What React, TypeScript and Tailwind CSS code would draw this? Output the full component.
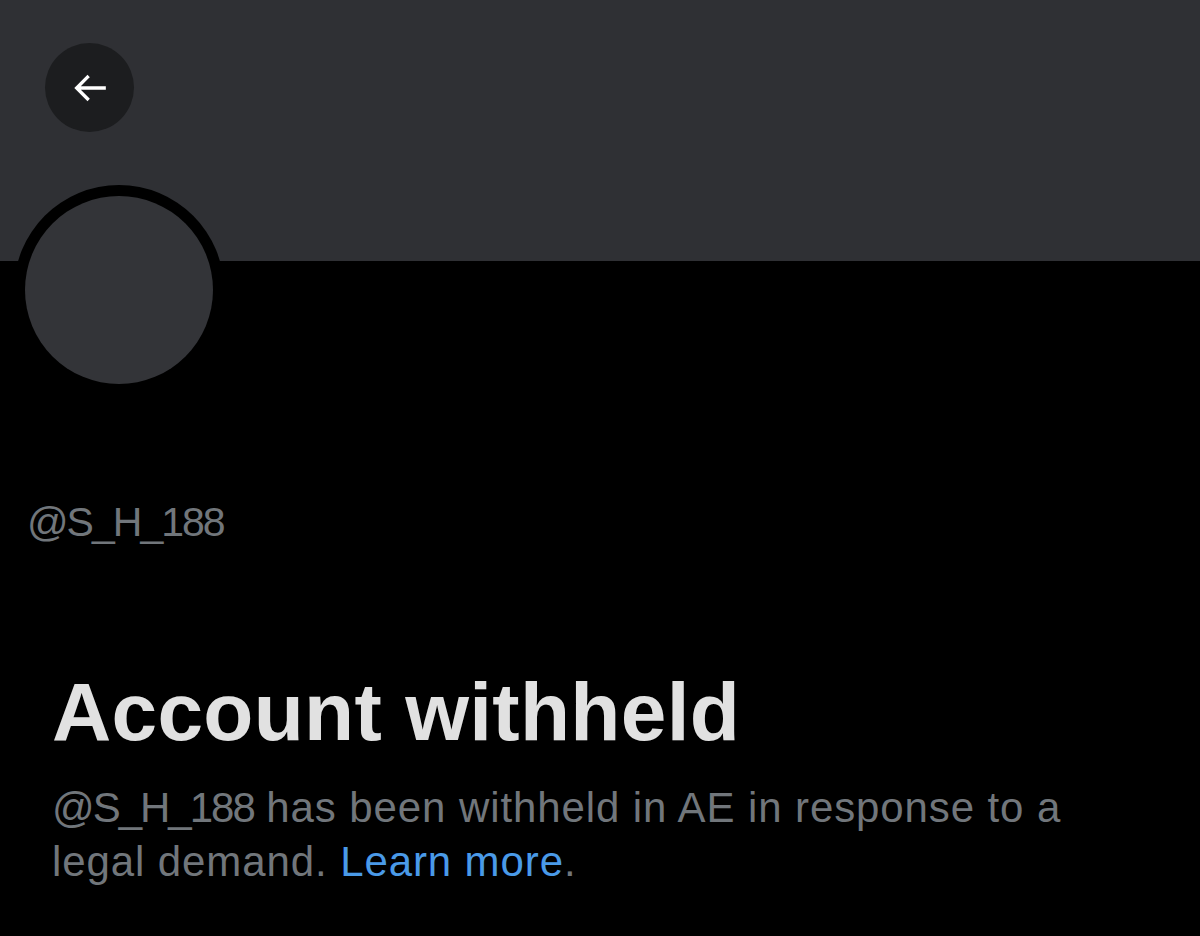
import React from "react";

export default function App() {
  return (
    <div
      className="w-[1200px] h-[936px] bg-black overflow-hidden"
      style={{ fontFamily: '"Liberation Sans", Arial, sans-serif' }}
    >
      <div className="h-[261px] bg-[#2f3034] pl-[45px] pt-[43px]">
        <button className="w-[89px] h-[89px] rounded-full bg-[#1c1d1f] flex items-center justify-center">
          <svg width="40" height="40" viewBox="0 0 24 24" fill="none">
            <path
              d="M20.5 12H4.5M10.5 5.5L4 12L10.5 18.5"
              stroke="#ffffff"
              strokeWidth="2"
              strokeLinecap="square"
            />
          </svg>
        </button>
      </div>
      <div className="-mt-[76px] ml-[14px] w-[210px] h-[210px] rounded-full bg-black p-[11px]">
        <div className="w-full h-full rounded-full bg-[#333438]" />
      </div>
      <div className="mt-[103px] pl-[27px] text-[41px] leading-[48px] text-[#71767b] tracking-[-2px]">
        @S_H_188
      </div>
      <div className="mt-[121px] pl-[52px] pr-[60px]">
        <h1 className="text-[82px] leading-[90px] font-bold text-[#e1e1e1] tracking-[0.3px]">
          Account withheld
        </h1>
        <p className="mt-[24px] text-[42px] leading-[54px] text-[#71767b] tracking-[0.9px]">
          <span className="tracking-[-2px]">@S_H_188</span> has been withheld in AE in
          response to a legal demand. <a className="text-[#4a9ae8]">Learn more</a>.
        </p>
      </div>
    </div>
  );
}
